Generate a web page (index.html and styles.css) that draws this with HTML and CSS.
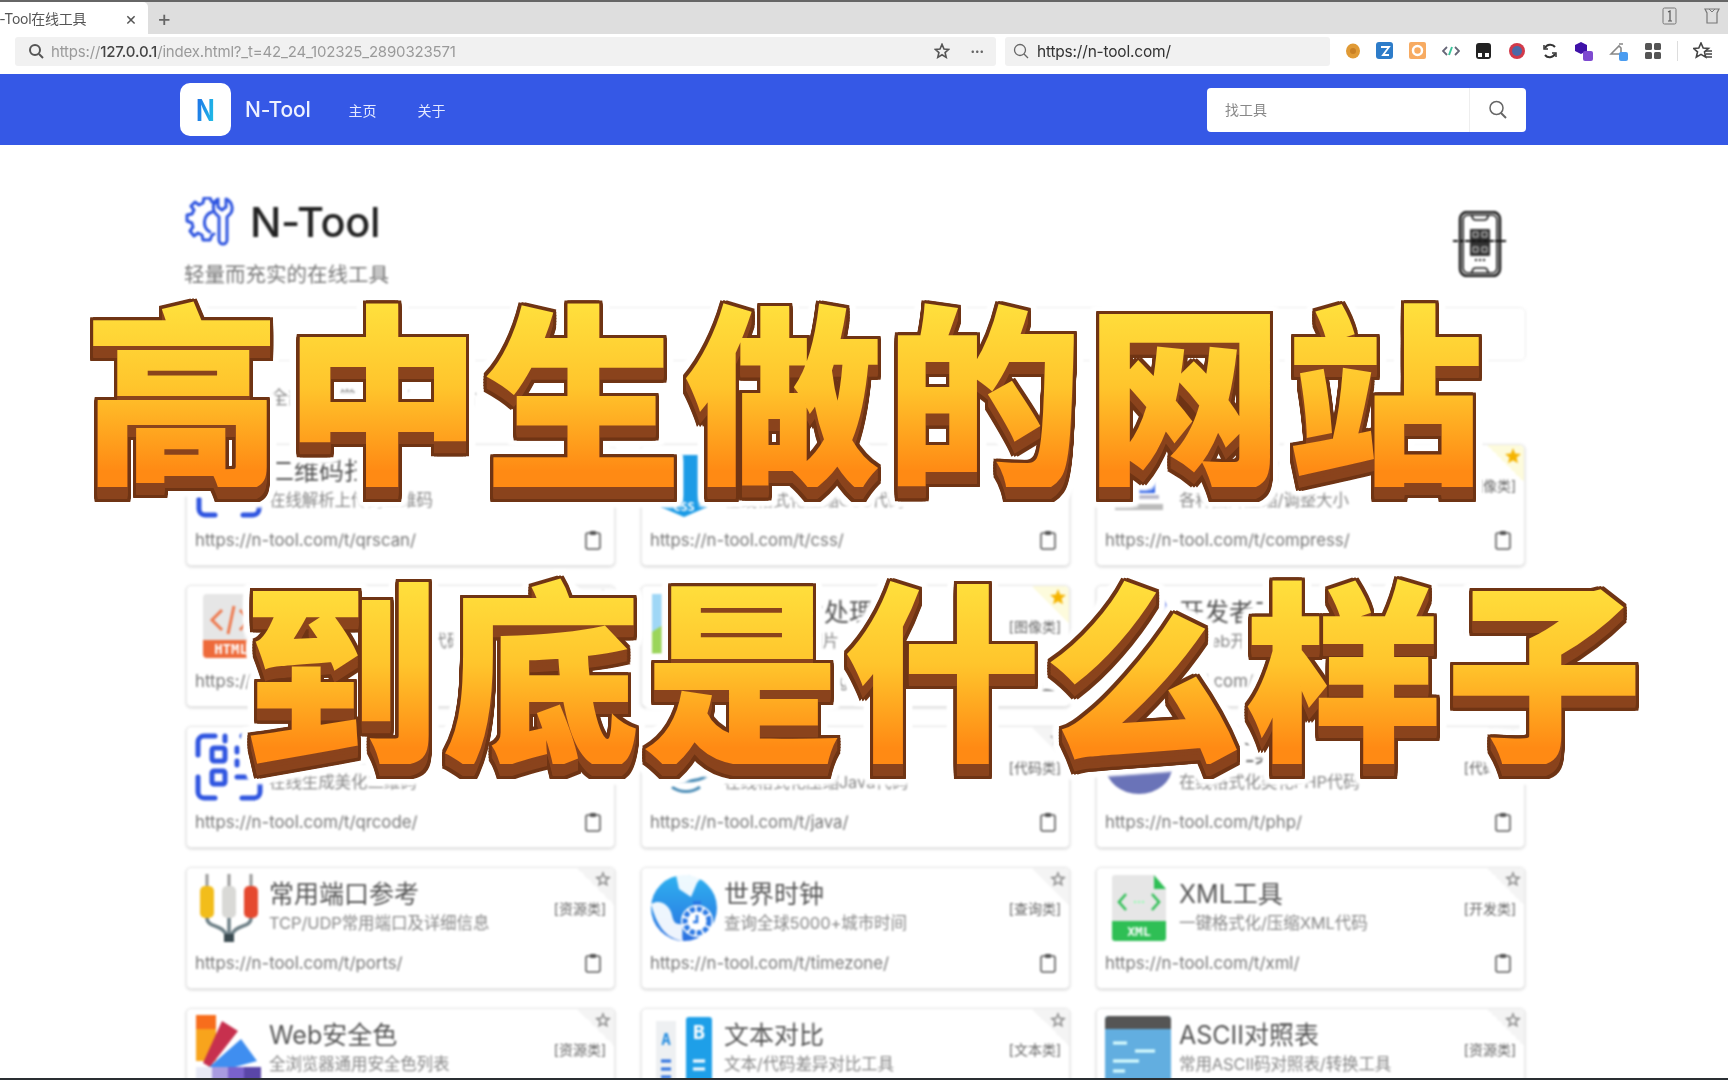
FILE: index.html
```html
<!DOCTYPE html>
<html lang="zh-CN">
<head>
<meta charset="utf-8">
<title>N-Tool在线工具</title>
<link rel="stylesheet" href="styles.css">
</head>
<body>
<div class="screen">
  <div class="browser">
    <div class="tabbar">
      <div class="tab"><span class="tab-title">N-Tool在线工具</span><span class="tab-close">×</span></div>
      <span class="tab-new">+</span>
      <div class="tab-right">
        <svg class="tb-ico" width="16" height="18" viewBox="0 0 16 18"><rect x="1" y="1" width="13" height="16" rx="1.5" fill="none" stroke="#777"/><path d="M6 5l2-1v10M6 14h4" stroke="#555" stroke-width="1.2" fill="none"/></svg>
        <svg class="tb-ico" width="16" height="18" viewBox="0 0 16 18"><path d="M1 2h14l-2 4v10H3V6z" fill="none" stroke="#777" stroke-width="1.2"/><path d="M5 2l3 3 3-3" stroke="#777" fill="none"/></svg>
      </div>
    </div>
    <div class="toolbar">
      <div class="addr addr-main">
        <svg class="addr-ico" width="16" height="16" viewBox="0 0 16 16"><circle cx="7" cy="7" r="5" fill="none" stroke="#555" stroke-width="2"/><path d="M11 11l4 4" stroke="#555" stroke-width="2"/></svg>
        <span class="addr-url">https://<b>127.0.0.1</b>/index.html?_t=42_24_102325_2890323571</span>
        <svg class="addr-star" width="16" height="16" viewBox="0 0 24 24"><path d="M12 2l3 7 7 .6-5.400 4.700 1.700 7.200L12 17.600 5.700 21.500l1.700-7.200L2 9.600 9 9z" fill="none" stroke="#555" stroke-width="2.400"/></svg>
        <span class="addr-more">•••</span>
      </div>
      <div class="addr addr-search">
        <svg class="addr-ico" width="16" height="16" viewBox="0 0 16 16"><circle cx="7" cy="7" r="5.500" fill="none" stroke="#666" stroke-width="1.300"/><path d="M11 11l4 4" stroke="#666" stroke-width="1.300"/></svg>
        <span class="addr-q">https://n-tool.com/</span>
      </div>
      <div class="ext">
        <svg width="16" height="18" viewBox="0 0 16 18"><ellipse cx="8" cy="9" rx="7" ry="7.500" fill="#e09a35"/><circle cx="8" cy="9" r="3" fill="#c98025"/></svg>
        <svg width="18" height="18" viewBox="0 0 18 18"><rect width="17" height="17" rx="3" fill="#2d7cc9"/><path d="M5 5h8l-6 8h6" fill="none" stroke="#fff" stroke-width="1.800"/></svg>
        <svg width="18" height="18" viewBox="0 0 18 18"><rect width="17" height="17" rx="2" fill="#f7ab62"/><circle cx="8.500" cy="8.500" r="4.500" fill="none" stroke="#fff" stroke-width="2.500"/></svg>
        <svg width="18" height="18" viewBox="0 0 18 18"><path d="M5 5L1 9l4 4M13 5l4 4-4 4" fill="none" stroke="#667" stroke-width="1.800"/><path d="M10 5L7 13" stroke="#3bc39a" stroke-width="2"/></svg>
        <svg width="18" height="18" viewBox="0 0 18 18"><rect x="1" y="1" width="15" height="16" rx="3" fill="#222"/><rect x="3" y="11" width="4" height="4" fill="#fff"/><rect x="10" y="11" width="4" height="4" fill="#fff"/></svg>
        <svg width="18" height="18" viewBox="0 0 18 18"><circle cx="9" cy="9" r="8" fill="#d23a4a"/><circle cx="9" cy="9" r="5" fill="#4b6aa8"/></svg>
        <svg width="18" height="18" viewBox="0 0 18 18"><path d="M14 5a6 6 0 0 0-10 1M4 13a6 6 0 0 0 10-1" fill="none" stroke="#333" stroke-width="2"/><path d="M3 3v4h4M15 15v-4h-4" fill="none" stroke="#333" stroke-width="1.500"/></svg>
        <svg width="20" height="20" viewBox="0 0 20 20"><path d="M7 1l6 3v6l-6 3-6-3V4z" fill="#3f12a8"/><rect x="9" y="10" width="10" height="10" rx="2" fill="#7e4ad0"/></svg>
        <svg width="20" height="20" viewBox="0 0 20 20"><path d="M2 13l8-8 2 2v6zM10 3h4" fill="none" stroke="#888" stroke-width="1.600"/><rect x="10" y="11" width="9" height="9" rx="2" fill="#4a9cf0"/></svg>
        <svg width="18" height="18" viewBox="0 0 18 18"><rect x="1" y="1" width="7" height="7" rx="1.500" fill="#555"/><rect x="10" y="1" width="7" height="7" rx="1.500" fill="#555"/><rect x="1" y="10" width="7" height="7" rx="1.500" fill="#555"/><rect x="10" y="10" width="7" height="7" rx="1.500" fill="#555"/></svg>
        <span class="ext-sep"></span>
        <svg width="20" height="18" viewBox="0 0 20 18"><path d="M8 1l2.200 5 5.300.4-4 3.500 1.200 5.300L8 12.400l-4.700 2.800 1.200-5.300-4-3.500L5.800 6z" fill="none" stroke="#444" stroke-width="1.600"/><path d="M13 9h6M13 12h6M13 15h6" stroke="#444" stroke-width="1.400"/></svg>
        <svg width="18" height="18" viewBox="0 0 18 18"><circle cx="9" cy="6" r="3" fill="none" stroke="#444" stroke-width="1.500"/><path d="M3 17c0-4 3-6 6-6" fill="none" stroke="#444" stroke-width="1.500"/></svg>
      </div>
    </div>
  </div>

  <header class="site-head">
    <div class="brand"><span class="brand-logo"><span class="brand-n">N</span></span><span class="brand-name">N-Tool</span></div>
    <nav class="nav"><a class="nav-link">主页</a><a class="nav-link">关于</a></nav>
    <div class="find">
      <span class="find-input">找工具</span>
      <span class="find-btn"><svg width="22" height="22" viewBox="0 0 22 22"><circle cx="9.500" cy="9" r="6.500" fill="none" stroke="#666" stroke-width="1.500"/><path d="M14 14l5 5" stroke="#666" stroke-width="2"/></svg></span>
    </div>
  </header>

  <main class="page">
    <section class="hero">
      <div>
        <div class="hero-title">
          <svg class="hero-ico" width="52" height="50" viewBox="0 0 52 50" fill="none" stroke="#2f55e0" stroke-width="3" stroke-linejoin="round" stroke-linecap="round">
            <path d="M31 6l-4-1-2-4h-6l-1 5-4 2-4-3-4 4 3 4-2 4-5 1v6l5 2 1 4-3 4 4 5 4-3 4 2 1 5h7l2-5 2-1"/>
            <path d="M27 15a11 11 0 0 0-2 20"/>
            <path d="M33 2v8l4 3 4-3V2c7 3 8 12 3 16l-2 2v23a4 4 0 0 1-8 0V20l-2-2c-5-4-5-13 1-16z"/>
          </svg>
          <h1 class="hero-name">N-Tool</h1>
        </div>
        <p class="hero-sub">轻量而充实的在线工具</p>
      </div>
      <svg class="hero-phone" width="54" height="66" viewBox="0 0 54 66" fill="none" stroke="#111">
        <rect x="7" y="1" width="40" height="64" rx="7" stroke-width="2.400"/>
        <rect x="10" y="4" width="34" height="58" rx="5" stroke-width="1.600"/>
        <path d="M19 4c0 4 2 5 4 5h8c2 0 4-1 4-5M19 62c0-4 2-5 4-5h8c2 0 4 1 4 5" stroke-width="1.600"/>
        <rect x="17" y="18" width="20" height="27" rx="1" fill="#333" stroke="none"/>
        <path d="M20 21h5v5h-5zM29 21h5v5h-5zM20 36h5v5h-5zM29 36h5v5h-5z" stroke="#ddd" stroke-width="1"/>
        <path d="M0 30h54" stroke="#111" stroke-width="2" stroke-dasharray="5 1"/>
        <path d="M22 49h2M26 49h2M30 49h2" stroke-width="2"/>
      </svg>
    </section>

    <div class="searchbar"></div>
    <div class="cats"><span>全部</span><span>常用引擎</span><span>图片</span><span>各类工具</span></div>

    <section class="grid">
      <article class="card"><svg class="ic" viewBox="0 0 68 68" fill="none" stroke="#2f55e0" stroke-width="5" stroke-linecap="round"><path d="M4 20V10a6 6 0 0 1 6-6h10M48 4h10a6 6 0 0 1 6 6v10M4 48v10a6 6 0 0 0 6 6h10M48 64h10a6 6 0 0 0 6-6V48"/><rect x="16" y="16" width="14" height="14"/><rect x="38" y="16" width="14" height="14"/><path d="M16 42h36"/></svg>
        <div class="txt"><h3 class="t">二维码扫描</h3><p class="d">在线解析上传的二维码</p></div><span class="cat">[工具类]</span>
        <div class="link"><span>https://n-tool.com/t/qrscan/</span><svg class="clip" viewBox="0 0 16 20"><use href="#clip"/></svg></div><i class="star"></i></article>
      <article class="card"><svg class="ic" viewBox="0 0 68 68"><path d="M6 4h56l-5 52-23 10-23-10z" fill="#1c9be6"/><text x="34" y="60" class="ic-t" fill="#fff" font-size="12">CSS</text></svg>
        <div class="txt"><h3 class="t">CSS工具</h3><p class="d">在线格式化压缩CSS代码</p></div><span class="cat">[代码类]</span>
        <div class="link"><span>https://n-tool.com/t/css/</span><svg class="clip" viewBox="0 0 16 20"><use href="#clip"/></svg></div><i class="star"></i></article>
      <article class="card on"><svg class="ic" viewBox="0 0 68 68"><path d="M34 2l16 22v18H18V24z" fill="#2f62e6"/><path d="M14 46h40" stroke="#bbc" stroke-width="4"/><path d="M10 56h48" stroke="#bbb" stroke-width="6"/></svg>
        <div class="txt"><h3 class="t">图片压缩</h3><p class="d">各种图片压缩/调整大小</p></div><span class="cat">[图像类]</span>
        <div class="link"><span>https://n-tool.com/t/compress/</span><svg class="clip" viewBox="0 0 16 20"><use href="#clip"/></svg></div><i class="star"></i></article>

      <article class="card"><svg class="ic" viewBox="0 0 68 68"><path d="M8 6a4 4 0 0 1 4-4h40l12 12v34H8z" fill="#e6e6e6"/><path d="M8 48h56v14a4 4 0 0 1-4 4H12a4 4 0 0 1-4-4z" fill="#ee6a3a"/><path d="M27 18l-10 10 10 10M45 18l10 10-10 10M39 14l-6 28" fill="none" stroke="#ee7a50" stroke-width="3"/><text x="36" y="62" class="ic-t" fill="#fff" font-size="14">HTML</text></svg>
        <div class="txt"><h3 class="t">HTML工具</h3><p class="d">在线格式化压缩HTML代码</p></div><span class="cat">[代码类]</span>
        <div class="link"><span>https://n-tool.com/t/html/</span><svg class="clip" viewBox="0 0 16 20"><use href="#clip"/></svg></div><i class="star"></i></article>
      <article class="card on"><svg class="ic" viewBox="0 0 68 68"><rect x="2" y="2" width="64" height="60" fill="#9fd7f6"/><path d="M2 62V40c16-12 36-14 64-6v28z" fill="#9bd55a"/><circle cx="42" cy="18" r="7" fill="#ffe66b"/></svg>
        <div class="txt"><h3 class="t">在线图片处理</h3><p class="d">在线批量改图片</p></div><span class="cat">[图像类]</span>
        <div class="link"><span>https://n-tool.com/t/image/</span><svg class="clip" viewBox="0 0 16 20"><use href="#clip"/></svg></div><i class="star"></i></article>
      <article class="card"><svg class="ic" viewBox="0 0 68 68"><rect x="6" y="6" width="56" height="56" rx="10" fill="#3b5ae0"/></svg>
        <div class="txt"><h3 class="t">开发者工具</h3><p class="d">为Web开发者提供便利</p></div><span class="cat">[开发类]</span>
        <div class="link"><span>https://n-tool.com/t/dev/</span><svg class="clip" viewBox="0 0 16 20"><use href="#clip"/></svg></div><i class="star"></i></article>

      <article class="card"><svg class="ic" viewBox="0 0 68 68" fill="none" stroke="#2f55e0" stroke-width="5" stroke-linecap="round"><path d="M3 22V9a6 6 0 0 1 6-6h11M47 3h12a6 6 0 0 1 6 6M3 44v15a6 6 0 0 0 6 6h11M47 65h12a6 6 0 0 0 6-6V46"/><rect x="17" y="15" width="13" height="13" rx="2"/><rect x="17" y="38" width="13" height="13" rx="2"/><path d="M42 15v4M42 28v4M42 44h12M54 26v4M30 3v5"/></svg>
        <div class="txt"><h3 class="t">二维码生成</h3><p class="d">在线生成美化二维码</p></div><span class="cat">[工具类]</span>
        <div class="link"><span>https://n-tool.com/t/qrcode/</span><svg class="clip" viewBox="0 0 16 20"><use href="#clip"/></svg></div><i class="star"></i></article>
      <article class="card"><svg class="ic" viewBox="0 0 68 68" fill="none" stroke="#4f8fb8" stroke-width="3"><path d="M20 30c8 6 24 6 32 0M14 42c10 8 34 8 44 0M22 54c8 6 20 6 28 0M34 4c-8 8 8 12 0 22"/></svg>
        <div class="txt"><h3 class="t">Java工具</h3><p class="d">在线格式化压缩Java代码</p></div><span class="cat">[代码类]</span>
        <div class="link"><span>https://n-tool.com/t/java/</span><svg class="clip" viewBox="0 0 16 20"><use href="#clip"/></svg></div><i class="star"></i></article>
      <article class="card"><svg class="ic" viewBox="0 0 68 68"><ellipse cx="34" cy="34" rx="33" ry="27" fill="#6a73b8"/></svg>
        <div class="txt"><h3 class="t">PHP工具</h3><p class="d">在线格式化美化PHP代码</p></div><span class="cat">[代码类]</span>
        <div class="link"><span>https://n-tool.com/t/php/</span><svg class="clip" viewBox="0 0 16 20"><use href="#clip"/></svg></div><i class="star"></i></article>

      <article class="card"><svg class="ic" viewBox="0 0 68 68"><path d="M12 0v12M34 0v12M56 0v12" stroke="#999" stroke-width="3"/><path d="M12 44c0 10 16 6 20 18M56 44c0 10-16 6-20 18M34 44v18" stroke="#6d7f86" stroke-width="3.500" fill="none"/><rect x="5" y="12" width="14" height="32" rx="5" fill="#f2bd1b"/><rect x="27" y="12" width="14" height="32" rx="5" fill="#d9d9d6"/><rect x="49" y="12" width="14" height="32" rx="5" fill="#e5492f"/><rect x="29" y="60" width="10" height="8" fill="#3a4a50"/></svg>
        <div class="txt"><h3 class="t">常用端口参考</h3><p class="d">TCP/UDP常用端口及详细信息</p></div><span class="cat">[资源类]</span>
        <div class="link"><span>https://n-tool.com/t/ports/</span><svg class="clip" viewBox="0 0 16 20"><use href="#clip"/></svg></div><i class="star"></i></article>
      <article class="card"><svg class="ic" viewBox="0 0 68 68"><defs><linearGradient id="gl" x1="0" y1="0" x2="0" y2="1"><stop offset="0" stop-color="#2fb2f0"/><stop offset="1" stop-color="#2a6fe0"/></linearGradient></defs><circle cx="34" cy="34" r="33" fill="url(#gl)"/><path d="M26 1l3 14 12 8 6-14 4-5C42 1 34 0 26 1zM1 30c10-6 18 2 20 8s2 12 8 12 2 8 4 17c-16-2-26-14-32-37z" fill="#fff" opacity=".92"/><circle cx="47" cy="47" r="16" fill="#fff"/><circle cx="47" cy="47" r="12" fill="none" stroke="#2a78e4" stroke-width="5" stroke-dasharray="5 2"/><path d="M47 41v7h-4" stroke="#2a78e4" stroke-width="2.500" fill="none"/><rect x="43" y="27" width="8" height="4" fill="#2a78e4"/></svg>
        <div class="txt"><h3 class="t">世界时钟</h3><p class="d">查询全球5000+城市时间</p></div><span class="cat">[查询类]</span>
        <div class="link"><span>https://n-tool.com/t/timezone/</span><svg class="clip" viewBox="0 0 16 20"><use href="#clip"/></svg></div><i class="star"></i></article>
      <article class="card"><svg class="ic" viewBox="0 0 68 68"><path d="M7 4a3 3 0 0 1 3-3h39l12 14v34H7z" fill="#e6e6e6"/><path d="M49 1l12 14H49z" fill="#2fbf55"/><path d="M7 47h54v17a3 3 0 0 1-3 3H10a3 3 0 0 1-3-3z" fill="#2fbf55"/><path d="M21 20l-7 8 7 8M47 20l7 8-7 8" fill="none" stroke="#2fbf55" stroke-width="2.500"/><path d="M29 28h2M33 28h2M37 28h2" stroke="#8fa" stroke-width="2"/><text x="34" y="62" class="ic-t" fill="#fff" font-size="13">XML</text></svg>
        <div class="txt"><h3 class="t">XML工具</h3><p class="d">一键格式化/压缩XML代码</p></div><span class="cat">[开发类]</span>
        <div class="link"><span>https://n-tool.com/t/xml/</span><svg class="clip" viewBox="0 0 16 20"><use href="#clip"/></svg></div><i class="star"></i></article>

      <article class="card"><svg class="ic" viewBox="0 0 68 68"><path d="M1 0h20v46H1z" fill="#f8a41c"/><path d="M1 0h20v14H1z" fill="#f76d1c"/><path d="M8 48L27 6l16 10-28 36z" fill="#c7304e"/><path d="M12 54L46 24l16 22-44 12z" fill="#3f8ef0"/><rect x="1" y="52" width="16" height="16" fill="#e8eaf6"/><rect x="17" y="52" width="16" height="16" fill="#a89be0"/><rect x="33" y="52" width="16" height="16" fill="#7a62cc"/><rect x="49" y="52" width="17" height="16" fill="#5a46a8"/></svg>
        <div class="txt"><h3 class="t">Web安全色</h3><p class="d">全浏览器通用安全色列表</p></div><span class="cat">[资源类]</span>
        <div class="link"><span>https://n-tool.com/t/websafe/</span><svg class="clip" viewBox="0 0 16 20"><use href="#clip"/></svg></div><i class="star"></i></article>
      <article class="card"><svg class="ic" viewBox="0 0 68 68"><rect x="6" y="6" width="20" height="62" fill="#eef0f2"/><rect x="36" y="2" width="26" height="66" rx="3" fill="#1e9fe8"/><text x="16" y="30" class="ic-t" fill="#2a8fe0" font-size="16">A</text><text x="49" y="24" class="ic-t" fill="#fff" font-size="20">B</text><path d="M11 46h10M11 54h10M11 62h10" stroke="#2a6fe0" stroke-width="3"/><path d="M43 46h12M43 54h12" stroke="#fff" stroke-width="3"/></svg>
        <div class="txt"><h3 class="t">文本对比</h3><p class="d">文本/代码差异对比工具</p></div><span class="cat">[文本类]</span>
        <div class="link"><span>https://n-tool.com/t/diff/</span><svg class="clip" viewBox="0 0 16 20"><use href="#clip"/></svg></div><i class="star"></i></article>
      <article class="card"><svg class="ic" viewBox="0 0 68 68"><rect y="1" width="66" height="67" rx="4" fill="#62aee0"/><path d="M0 5a4 4 0 0 1 4-4h58a4 4 0 0 1 4 4v9H0z" fill="#555"/><path d="M8 28h14M30 36h20M8 46h26M8 56h12" stroke="#dff" stroke-width="3"/></svg>
        <div class="txt"><h3 class="t">ASCII对照表</h3><p class="d">常用ASCII码对照表/转换工具</p></div><span class="cat">[资源类]</span>
        <div class="link"><span>https://n-tool.com/t/ascii/</span><svg class="clip" viewBox="0 0 16 20"><use href="#clip"/></svg></div><i class="star"></i></article>
    </section>
  </main>
  <div class="bottom"></div>

  <div class="banner">
    <div class="banner-a">高中生做的网站</div>
    <div class="banner-b">到底是什么样子</div>
  </div>
</div>
<svg class="defs" width="0" height="0"><symbol id="clip" viewBox="0 0 16 20"><path d="M5 3H3a2 2 0 0 0-2 2v12a2 2 0 0 0 2 2h10a2 2 0 0 0 2-2V5a2 2 0 0 0-2-2h-2" fill="none" stroke="#555" stroke-width="1.500"/><rect x="5" y="1" width="6" height="4" rx="1" fill="#555"/></symbol></svg>
</body>
</html>
```
FILE: styles.css
```css
* { box-sizing: border-box; }
html, body { margin: 0; padding: 0; background: #fff; }
body { font-family: Inter, "Noto Sans", "Noto Sans CJK SC", sans-serif; color: #555; }
.screen { width: 1728px; height: 1080px; overflow: hidden; display: flex; flex-direction: column; position: relative; }
.defs { position: absolute; }

/* browser chrome */
.browser { flex: none; filter: blur(.7px); }
.tabbar { height: 34px; background: #dedede; border-top: 2px solid #666; display: flex; align-items: center; }
.tab { width: 148px; height: 32px; background: #fff; border-radius: 0 5px 0 0; display: flex; align-items: center; justify-content: space-between; padding-right: 11px; overflow: hidden; }
.tab-title { font-size: 14px; margin-left: -11px; color: #555; letter-spacing: -.3px; white-space: nowrap; }
.tab-close { font-size: 18px; color: #555; }
.tab-new { font-size: 22px; margin-left: 9px; color: #666; line-height: 1; }
.tab-right { margin-left: auto; display: flex; gap: 26px; padding-right: 8px; margin-top: -4px; }
.toolbar { height: 40px; background: #fff; display: flex; align-items: center; padding-left: 15px; padding-bottom: 6px; }
.addr { height: 29px; background: #f1f1f1; border-radius: 3px; display: flex; align-items: center; }
.addr-main { width: 981px; padding: 0 12px 0 13px; }
.addr-search { width: 325px; margin-left: 9px; padding-left: 8px; }
.addr-ico { flex: none; }
.addr-url { margin-left: 7px; font-size: 15px; color: #9a9a9a; letter-spacing: -.17px; white-space: nowrap; }
.addr-url b { font-weight: 500; color: #444; }
.addr-star { margin-left: auto; margin-right: 4px; }
.addr-more { margin-left: 17px; font-size: 8px; color: #666; }
.addr-q { margin-left: 8px; font-size: 15.500px; color: #333; letter-spacing: -.2px; }
.ext { flex: 1; display: flex; align-items: center; gap: 15px; padding-left: 15px; overflow: hidden; }
.ext svg { flex: none; }
.ext-sep { width: 1px; height: 20px; background: #ddd; flex: none; }

/* site header */
.site-head { flex: none; height: 71px; background: #3558e6; display: flex; align-items: center; padding: 0 202px 0 180px; filter: blur(.7px); }
.brand { display: flex; align-items: center; gap: 14px; }
.brand-logo { width: 51px; height: 53px; background: #fff; border-radius: 10px; display: flex; align-items: center; justify-content: center; }
.brand-n { display: inline-block; transform: scaleX(.82); font-size: 30px; font-weight: 700; line-height: 1; background: linear-gradient(100deg, #1e6be8, #20c6e6); -webkit-background-clip: text; background-clip: text; color: transparent; }
.brand-name { font-size: 21px; font-weight: 500; color: #eef1ff; letter-spacing: -.2px; }
.nav { display: flex; gap: 41px; margin-left: 38px; }
.nav-link { font-size: 14px; color: #e4e9ff; }
.find { margin-left: auto; width: 319px; height: 44px; background: #fff; border-radius: 4px; display: flex; }
.find-input { flex: 1; padding: 0 18px; line-height: 44px; font-size: 14px; color: #888; border-right: 1px solid #eee; }
.find-btn { width: 56px; display: flex; align-items: center; justify-content: center; }

/* page */
.page { flex: 1; min-height: 0; overflow: hidden; padding: 52px 202px 0 186px; filter: blur(.8px); }
.hero { display: flex; justify-content: space-between; align-items: flex-start; height: 110px; }
.hero-title { display: flex; align-items: center; gap: 13px; height: 50px; margin-left: -1px; }
.hero-ico { flex: none; }
.hero-name { margin: 0; font-size: 41.500px; font-weight: 500; color: #222; letter-spacing: -.3px; }
.hero-sub { margin: 15px 0 0 -2px; font-size: 20.500px; line-height: 26px; color: #777; }
.hero-phone { margin: 14px 19px 0 0; }
.searchbar { height: 54px; border: 1px solid #eee; border-radius: 6px; }
.cats { height: 63px; display: flex; gap: 32px; padding: 22px 0 0 84px; font-size: 18px; color: #888; }
.cats span { white-space: nowrap; }
.grid { display: grid; grid-template-columns: repeat(3, 429px); grid-auto-rows: 122px; column-gap: 26px; row-gap: 19px; margin-top: 20px; }

.card { position: relative; display: grid; grid-template-columns: 68px 1fr auto; grid-template-rows: 69px 30px; column-gap: 6px; row-gap: 5px; padding: 6px 8px 0 8px; background: #fff; border: 1px solid #e8e8e8; border-radius: 5px; box-shadow: 0 1px 3px rgba(0, 0, 0, .18); }
.card::before { content: ""; position: absolute; top: 0; right: 0; width: 36px; height: 38px; background: linear-gradient(45deg, transparent 50%, #f4f4f4 50%); border-radius: 0 5px 0 0; }
.card.on::before { background: linear-gradient(45deg, transparent 50%, #fdfbdc 50%); }
.ic { width: 68px; height: 68px; }
.ic-t { font-family: "DejaVu Sans Mono", monospace; font-weight: 700; text-anchor: middle; }
.txt { min-width: 0; margin-top: 3px; }
.t { margin: 0; font-size: 25px; font-weight: 400; line-height: 35px; color: #555; white-space: nowrap; }
.d { margin: 0; font-size: 16.500px; line-height: 22px; color: #888; white-space: nowrap; letter-spacing: -.1px; }
.cat { align-self: center; font-size: 14px; color: #666; position: relative; top: -1px; }
.link { grid-column: 1 / -1; display: flex; justify-content: space-between; align-items: center; padding-right: 5px; font-size: 16.800px; color: #777; }
.clip { width: 16px; height: 20px; }
.star { position: absolute; top: 3px; right: 3px; width: 16px; height: 16px; background: #888; clip-path: polygon(50% 0, 63% 35%, 100% 38%, 72% 60%, 81% 96%, 50% 77%, 19% 96%, 28% 60%, 0 38%, 37% 35%, 50% 0, 50% 22%, 43% 43%, 22% 45%, 39% 57%, 33% 78%, 50% 66%, 67% 78%, 61% 57%, 78% 45%, 57% 43%, 50% 22%); }
.card.on .star { background: #f5b400; clip-path: polygon(50% 0, 63% 35%, 100% 38%, 72% 60%, 81% 96%, 50% 77%, 19% 96%, 28% 60%, 0 38%, 37% 35%); }
.bottom { position: absolute; left: 0; right: 0; bottom: 0; height: 2px; background: #2a2f33; }

/* headline overlay */
.banner { position: absolute; inset: 0; pointer-events: none; }
.banner-a, .banner-b { position: absolute; white-space: nowrap; font-family: "Noto Sans CJK SC", sans-serif; font-weight: 900; font-size: 196px; line-height: 200px; letter-spacing: 4.500px; background: linear-gradient(180deg, #ffe23e 5%, #ffc52c 50%, #ff8a14 92%); -webkit-background-clip: text; background-clip: text; color: transparent; -webkit-text-stroke: 2px transparent; filter: drop-shadow(0 1px 0 #8a431c) drop-shadow(0 2px 0 #8a431c) drop-shadow(0 3px 0 #8a431c) drop-shadow(0 6px 0 #8a431c) drop-shadow(3px 0 0 #6f3414) drop-shadow(-3px 0 0 #6f3414) drop-shadow(0 3px 0 #6f3414) drop-shadow(0 -3px 0 #6f3414) drop-shadow(5px 0 1px #fff) drop-shadow(-5px 0 1px #fff) drop-shadow(0 5px 1px #fff) drop-shadow(0 -5px 1px #fff); }
.banner-a { left: 84px; top: 287px; }
.banner-b { left: 243px; top: 564px; }
```
